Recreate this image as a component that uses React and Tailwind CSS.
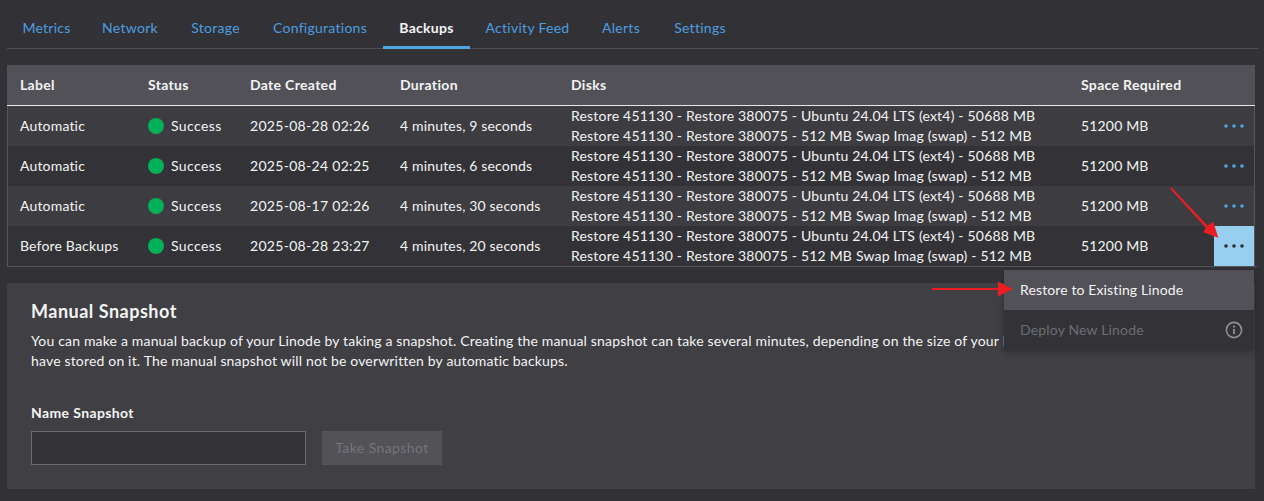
const rows = [
  ["Automatic", "2025-08-28 02:26", "4 minutes, 9 seconds"],
  ["Automatic", "2025-08-24 02:25", "4 minutes, 6 seconds"],
  ["Automatic", "2025-08-17 02:26", "4 minutes, 30 seconds"],
  ["Before Backups", "2025-08-28 23:27", "4 minutes, 20 seconds"],
];
const tabs = [
  ["Metrics", "w-[79px]"],
  ["Network", "w-[88px]"],
  ["Storage", "w-[83px]"],
  ["Configurations", "w-[126px]"],
  ["Backups", "w-[87px]"],
  ["Activity Feed", "w-[115px]"],
  ["Alerts", "w-[72px]"],
  ["Settings", "w-[86px]"],
];
const grid = "grid grid-cols-[128px_102px_150px_171px_510px_145px_40px] items-center";

function Dots({ dark }) {
  return (
    <svg width="20" height="4" viewBox="0 0 20 4" className={dark ? "text-[#2f2f33]" : "text-[#4ea8e6]"} fill="currentColor">
      <circle cx="2" cy="2" r="1.8" />
      <circle cx="10" cy="2" r="1.8" />
      <circle cx="18" cy="2" r="1.8" />
    </svg>
  );
}

export default function App() {
  return (
    <div className="relative min-h-screen bg-[#323236] px-[7px] pt-2 text-[14px] tracking-[0.17px] text-[#f4f4f4] font-['Lato',sans-serif] overflow-hidden">
      <div className="flex h-[41px] border-b border-[#4f4f55] mr-[-1px] tracking-[0.27px]">
        {tabs.map(([t, w]) => (
          <div
            key={t}
            className={
              t === "Backups"
                ? `${w} h-[41px] flex items-center justify-center font-bold text-[#f4f4f4] border-b-[3px] border-[#4ea8e6]`
                : `${w} h-10 pb-[2px] flex items-center justify-center text-[#4d9de0]`
            }
          >
            {t}
          </div>
        ))}
      </div>

      <div className="mt-4 border-b border-[#55555b]">
        <div className={`${grid} h-[41px] bg-[#515157] pl-px pb-[2px] font-bold tracking-[0.32px] border-b border-[#e8e8e8] w-[1248px]`}>
          <div className="pl-3">Label</div>
          <div className="pl-3">Status</div>
          <div className="pl-3">Date Created</div>
          <div className="pl-3">Duration</div>
          <div className="pl-3">Disks</div>
          <div className="pl-3">Space Required</div>
          <div />
        </div>
        {rows.map((r, i) => (
          <div
            key={i}
            className={`${grid} h-10 border-x border-[#55555b] w-[1248px] ${i % 2 === 0 ? "bg-[#3c3c41]" : "bg-[#333337]"}`}
          >
            <div className="pl-3 pb-[2px]">{r[0]}</div>
            <div className="pl-3 flex items-center gap-[7px]">
              <span className="size-4 rounded-full bg-[#00b159]" />
              <span className="pb-[2px] tracking-[0.4px]">Success</span>
            </div>
            <div className="pl-3 pb-[2px] tracking-[0.3px]">{r[1]}</div>
            <div className="pl-3 pb-[2px]">{r[2]}</div>
            <div className="pl-3 leading-5 whitespace-nowrap tracking-[0.2px]">
              <div>Restore 451130 - Restore 380075 - Ubuntu 24.04 LTS (ext4) - 50688 MB</div>
              <div>Restore 451130 - Restore 380075 - 512 MB Swap Imag (swap) - 512 MB</div>
            </div>
            <div className="pl-3 pb-[2px]">51200 MB</div>
            <div className={`h-10 flex items-center justify-center ${i === 3 ? "bg-[#97cff0]" : ""}`}>
              <Dots dark={i === 3} />
            </div>
          </div>
        ))}
      </div>

      <div className="mt-4 h-[206px] w-[1248px] bg-[#3f3f44] px-6 pt-4">
        <h2 className="text-[18px] leading-6 font-bold tracking-[0.5px]">Manual Snapshot</h2>
        <p className="mt-2 leading-5 whitespace-nowrap">
          You can make a manual backup of your Linode by taking a snapshot. Creating the manual snapshot can take several minutes, depending on the size of your Linode and the amount of data you
          <br />
          have stored on it. The manual snapshot will not be overwritten by automatic backups.
        </p>
        <label className="block mt-[32px] font-bold leading-5 tracking-[0.38px]">Name Snapshot</label>
        <div className="mt-2 flex gap-4">
          <div className="w-[275px] h-[34px] bg-[#333337] border border-[#6a6a70]" />
          <div className="w-[120px] h-[34px] pb-[2px] bg-[#525257] text-[#75757c] tracking-[0.42px] flex items-center justify-center">Take Snapshot</div>
        </div>
      </div>

      <div className="absolute left-[1004px] top-[270px] w-[250px] shadow-[0_2px_6px_rgba(0,0,0,0.25)]">
        <div className="h-10 bg-[#515157] pl-4 pb-[2px] flex items-center tracking-[0.12px]">Restore to Existing Linode</div>
        <div className="h-10 bg-[#333337] pl-4 pr-[11px] flex items-center justify-between text-[#6d6d74]">
          <span className="pb-[2px]">Deploy New Linode</span>
          <svg width="18" height="18" viewBox="0 0 18 18" fill="none" stroke="#8f8f95" strokeWidth="1.6">
            <circle cx="9" cy="9" r="7.6" />
            <path d="M9 8v5" strokeWidth="1.8" />
            <path d="M9 4.8v1.8" strokeWidth="1.8" />
          </svg>
        </div>
      </div>

      <svg className="absolute left-0 top-0 pointer-events-none" width="1264" height="501" fill="#ec1c24" stroke="none">
        <path d="M1170.2 188.8L1171.6 187.4L1207.4 225.6L1213.3 221.7L1218.3 237.7L1203.3 232.3L1205.8 227.8Z" />
        <path d="M932 288H998V281.5L1013 289L998 296.5V290H932Z" />
      </svg>
    </div>
  );
}
